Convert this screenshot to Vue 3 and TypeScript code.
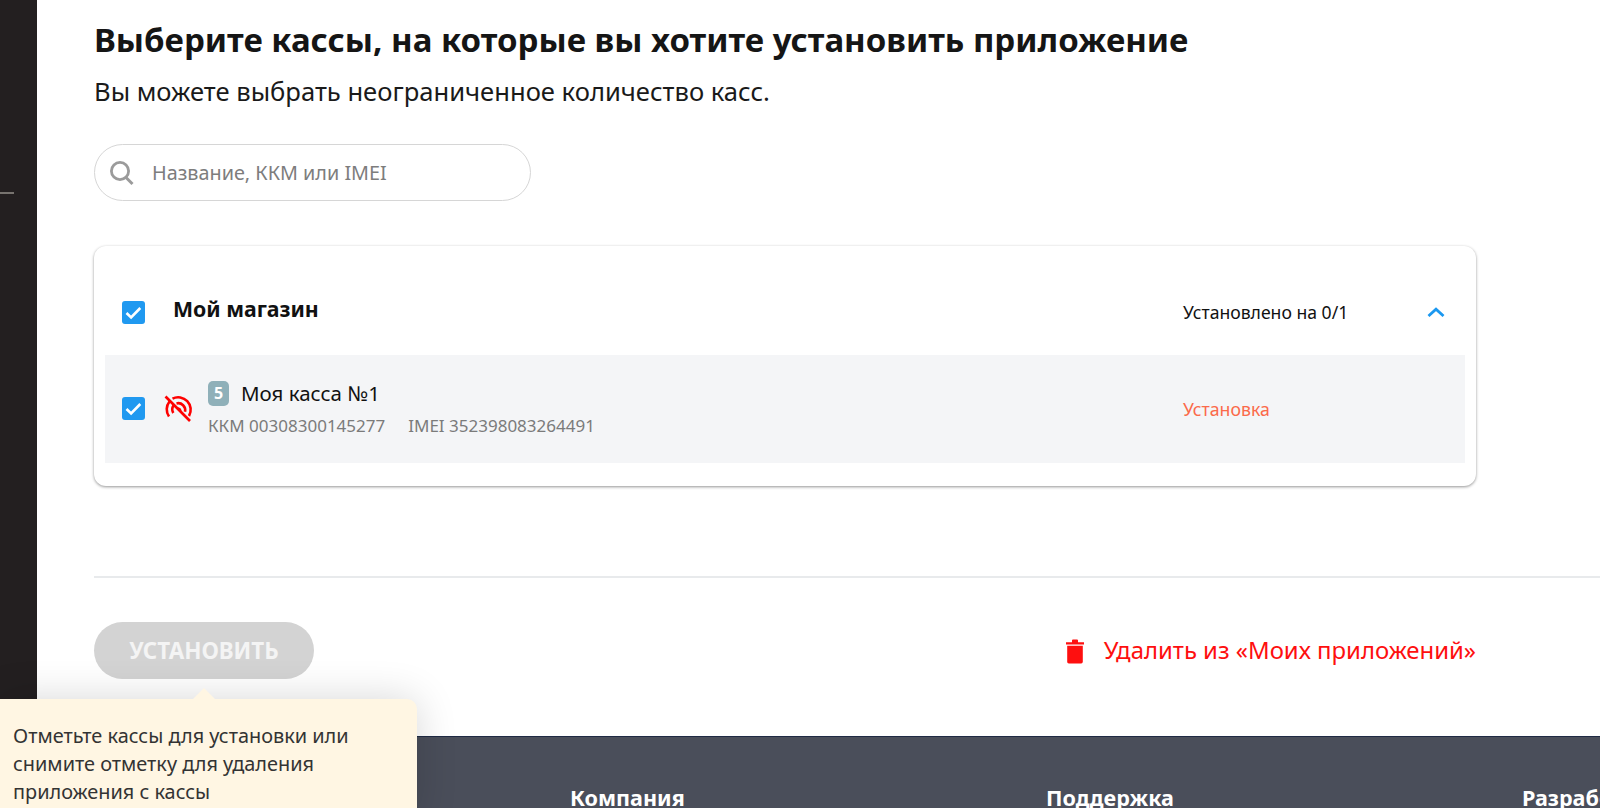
<script setup lang="ts">
const footerColumns: string[] = ["Компания", "Поддержка", "Разработчикам"]
</script>

<template>
	<div class="page">
		<aside class="sidebar"><span class="sidebar-line"></span></aside>
		<div class="content">
			<main class="main">
				<h1 class="title">Выберите кассы, на которые вы хотите установить приложение</h1>
				<p class="subtitle">Вы можете выбрать неограниченное количество касс.</p>

				<div class="search">
					<svg class="search-icon" viewBox="0 0 26 26" width="26" height="26">
						<circle cx="11" cy="11" r="8.6" fill="none" stroke="#9b9b9b" stroke-width="2.8" />
						<path d="M17 17.5l6.5 6.5" stroke="#9b9b9b" stroke-width="3" fill="none" />
					</svg>
					<span class="placeholder">Название, ККМ или IMEI</span>
				</div>

				<section class="card">
					<div class="store-row">
						<span class="checkbox">
							<svg viewBox="0 0 23 23" width="23" height="23">
								<path d="M4.5 12l4.6 4.4 9.2-9.4" fill="none" stroke="#fff" stroke-width="2.6" />
							</svg>
						</span>
						<span class="store-name">Мой магазин</span>
						<span class="store-status">Установлено на 0/1</span>
						<svg class="chevron" viewBox="0 0 18 10" width="18" height="10">
							<path d="M1.5 9l7.5-6.8L16.5 9" fill="none" stroke="#1b98f0" stroke-width="2.8" />
						</svg>
					</div>
					<div class="device-row">
						<span class="checkbox device-check">
							<svg viewBox="0 0 23 23" width="23" height="23">
								<path d="M4.5 12l4.6 4.4 9.2-9.4" fill="none" stroke="#fff" stroke-width="2.6" />
							</svg>
						</span>
						<svg class="signal" viewBox="0 0 30 28" width="30" height="28">
							<g fill="none" stroke="#fe0000" stroke-width="2.6">
								<path d="M6.5 6.5A12.5 12.5 0 0 0 6 21.5" />
								<path d="M9.5 3.6A12.5 12.5 0 0 1 26 21" />
								<path d="M10.5 10.5A7 7 0 0 0 10.3 18" />
								<path d="M13.5 8.4A7 7 0 0 1 22 16.8" />
								<path d="M15 13.5a2.4 2.4 0 0 1 2.2 2.8" />
								<path d="M2.5 1.5L27 26" />
							</g>
						</svg>
						<div class="device-info">
							<div class="device-head">
								<span class="badge">5</span>
								<span class="device-name">Моя касса №1</span>
							</div>
							<div class="device-meta">
								<span>ККМ 00308300145277</span>
								<span>IMEI 352398083264491</span>
							</div>
						</div>
						<span class="device-status">Установка</span>
					</div>
				</section>

				<hr class="divider" />

				<div class="actions">
					<button class="install" type="button" disabled>УСТАНОВИТЬ</button>
					<a class="remove">
						<svg viewBox="0 0 18 26" width="18" height="26">
							<path d="M0 4.2h18v2.2H0zM6 4.2V2.6Q6 1.6 7 1.6h4q1 0 1 1v1.6z" fill="#fe0f0f" />
							<path d="M1.2 7.8h15.6v16q0 1.6-1.6 1.6H2.8q-1.6 0-1.6-1.6z" fill="#fe0f0f" />
						</svg>
						<span>Удалить из «Моих приложений»</span>
					</a>
				</div>
			</main>

			<footer class="footer">
				<span v-for="column of footerColumns" :key="column" class="footer-title">{{ column }}</span>
			</footer>
		</div>

		<div class="tooltip">
			Отметьте кассы для установки или снимите отметку для удаления приложения с кассы
		</div>
	</div>
</template>

<style scoped>
.page {
	position: relative;
	display: flex;
	width: 1600px;
	height: 808px;
	overflow: hidden;
	background: #fff;
	font-family: "Noto Sans", "Open Sans", sans-serif;
	color: #111;
}

.sidebar {
	flex: 0 0 37px;
	padding-top: 192px;
	background: #231f20;
}

.sidebar-line {
	display: block;
	width: 14px;
	height: 2px;
	background: #77736f;
}

.content {
	flex: 1;
	min-width: 0;
	display: flex;
	flex-direction: column;
}

.main {
	flex: 1;
	padding: 18px 0 0 57px;
}

.title {
	margin: 0;
	font-size: 33px;
	line-height: 44px;
	font-weight: 700;
	color: #151515;
	white-space: nowrap;
}

.subtitle {
	margin: 14px 0 0;
	font-size: 25.6px;
	line-height: 32px;
	color: #1a1a1a;
}

.search {
	display: flex;
	align-items: center;
	gap: 17px;
	width: 437px;
	height: 57px;
	margin-top: 36px;
	padding-left: 14px;
	box-sizing: border-box;
	border: 1px solid #d6d6d6;
	border-radius: 29px;
}

.placeholder {
	font-size: 19.8px;
	color: #7d7d7d;
}

.card {
	width: 1382px;
	height: 240px;
	margin-top: 45px;
	padding: 0 11px;
	box-sizing: border-box;
	border-radius: 12px;
	background: #fff;
	box-shadow: 0 1px 3px rgba(0, 0, 0, 0.42);
}

.store-row {
	display: flex;
	align-items: center;
	height: 109px;
	padding: 23px 20px 0 17px;
	box-sizing: border-box;
}

.checkbox {
	flex: none;
	display: block;
	width: 23px;
	height: 23px;
	border-radius: 3px;
	background: #2099f0;
}

.checkbox svg {
	display: block;
}

.device-check {
	margin-top: -2px;
}

.store-name {
	margin: -8px 0 0 28px;
	font-size: 21.3px;
	font-weight: 700;
	color: #111;
}

.store-status {
	margin-left: auto;
	width: 244px;
	font-size: 17.6px;
	color: #111;
}

.device-row {
	display: flex;
	align-items: center;
	height: 108px;
	padding: 0 19px 0 17px;
	box-sizing: border-box;
	background: #f4f5f7;
}

.signal {
	flex: none;
	margin: 0 0 0 18px;
}

.device-info {
	margin: 0 0 0 15px;
}

.device-head {
	display: flex;
	align-items: center;
	gap: 12px;
}

.badge {
	width: 21px;
	height: 25px;
	border-radius: 5px;
	background: #8fb0b9;
	color: #fff;
	font-size: 16px;
	font-weight: 700;
	line-height: 25px;
	text-align: center;
}

.device-name {
	font-size: 20.5px;
	line-height: 26px;
	margin-top: -2px;
	color: #111;
}

.device-meta {
	display: flex;
	gap: 23px;
	margin-top: 8px;
	font-size: 17px;
	color: #7b7b7b;
}

.device-status {
	margin-left: auto;
	width: 263px;
	font-size: 17.7px;
	color: #fb6a4a;
}

.divider {
	width: 100%;
	height: 2px;
	margin: 90px 0 0;
	border: 0;
	background: #e8eaec;
}

.actions {
	display: flex;
	align-items: center;
	justify-content: space-between;
	width: 1382px;
	margin-top: 44px;
}

.install {
	width: 220px;
	height: 57px;
	border: 0;
	border-radius: 29px;
	background: #d3d3d3;
	color: #f4f4f4;
	font-family: inherit;
	font-size: 22.4px;
	font-weight: 700;
}

.remove {
	display: flex;
	align-items: center;
	gap: 20px;
	font-size: 23.9px;
	line-height: 28px;
	color: #fe0f0f;
}

.remove span {
	margin-top: -2px;
}

.footer {
	display: grid;
	grid-template-columns: 476px 476px 1fr;
	height: 72px;
	padding: 46px 0 0 533px;
	box-sizing: border-box;
	border-top: 1px solid #1f2a44;
	background: #4a4e5a;
}

.footer-title {
	font-size: 21.6px;
	font-weight: 700;
	color: #fff;
	white-space: nowrap;
}

.tooltip {
	position: absolute;
	left: 0;
	top: 699px;
	width: 417px;
	height: 120px;
	padding: 23px 13px 0;
	box-sizing: border-box;
	border-radius: 0 10px 0 0;
	background: #fff6e3;
	box-shadow: 0 0 40px rgba(0, 0, 0, 0.16);
	font-size: 19.9px;
	line-height: 28px;
	color: #333;
}

.tooltip::before {
	content: "";
	position: absolute;
	left: 193px;
	top: -11px;
	width: 22px;
	height: 11px;
	background: #fff6e3;
	clip-path: polygon(50% 0, 100% 100%, 0 100%);
}
</style>

<style>
html,
body {
	margin: 0;
	overflow: hidden;
}
</style>
